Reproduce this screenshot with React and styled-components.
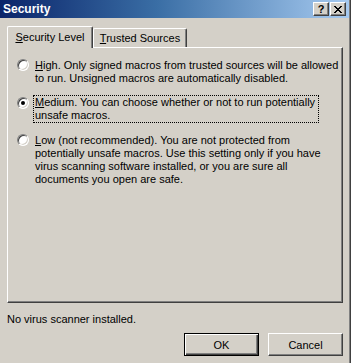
import React from "react";
import styled, { createGlobalStyle } from "styled-components";

const GlobalStyle = createGlobalStyle`
  html, body {
    margin: 0;
    padding: 0;
    background: #d4d0c8;
  }
  body {
    font-family: "Liberation Sans", Arial, sans-serif;
    font-size: 11px;
    color: #000;
  }
`;

const Window = styled.div`
  width: 351px;
  height: 363px;
  box-sizing: border-box;
  background: #d4d0c8;
  border-right: 1px solid #404040;
  box-shadow: inset -1px 0 #808080;
  display: flex;
  flex-direction: column;
  overflow: hidden;
`;

const TitleBar = styled.div`
  height: 18px;
  margin-right: 1px;
  display: flex;
  align-items: center;
  justify-content: space-between;
  padding: 0 3px 0 3px;
  background: linear-gradient(to right, #0a246a 0%, #3a6ea5 45%, #a6caf0 100%);
`;

const Title = styled.span`
  color: #fff;
  font-weight: bold;
  font-size: 12px;
  letter-spacing: 0;
`;

const CaptionButtons = styled.div`
  display: flex;
  gap: 1px;
`;

const CaptionButton = styled.div`
  width: 16px;
  height: 14px;
  box-sizing: border-box;
  background: #d4d0c8;
  border: 1px solid;
  border-color: #fff #404040 #404040 #fff;
  box-shadow: inset -1px -1px #808080;
  display: flex;
  align-items: center;
  justify-content: center;
  font-weight: bold;
  font-size: 11px;
  line-height: 1;
`;

const Body = styled.div`
  flex: 1;
  display: flex;
  flex-direction: column;
  padding: 8px 8px 0 7px;
`;

const TabRow = styled.div`
  display: flex;
  align-items: flex-end;
  height: 21px;
  position: relative;
  z-index: 1;
`;

const Tab = styled.div`
  box-sizing: border-box;
  width: ${(p) => p.$width}px;
  height: ${(p) => (p.$active ? 22 : 19)}px;
  margin-bottom: ${(p) => (p.$active ? -1 : 0)}px;
  margin-left: ${(p) => (p.$first ? 0 : 0)}px;
  background: #d4d0c8;
  border-top: 1px solid #fff;
  border-left: 1px solid #fff;
  border-right: 1px solid #404040;
  box-shadow: inset -1px 0 #808080;
  border-top-left-radius: 2px;
  border-top-right-radius: 2px;
  display: flex;
  align-items: ${(p) => (p.$active ? "flex-start" : "center")};
  padding-top: ${(p) => (p.$active ? 4 : 0)}px;
  justify-content: center;
  white-space: nowrap;
`;

const Panel = styled.div`
  box-sizing: border-box;
  width: 336px;
  height: 256px;
  border: 1px solid;
  border-color: #fff #404040 #404040 #fff;
  box-shadow: inset -1px -1px #808080;
  padding: 10px 10px 0 9px;
  display: flex;
  flex-direction: column;
`;

const Option = styled.div`
  display: flex;
  align-items: flex-start;
  gap: 4px;
  margin-top: ${(p) => p.$gap}px;
`;

const Radio = styled.span`
  flex: none;
  width: 12px;
  height: 12px;
  box-sizing: border-box;
  margin-top: ${(p) => p.$offset}px;
  border-radius: 50%;
  background: #fff;
  border: 1px solid;
  border-color: #808080 #fff #fff #808080;
  box-shadow: inset 1px 1px #404040, inset -1px -1px #d4d0c8;
  display: flex;
  align-items: center;
  justify-content: center;
  &::after {
    content: "";
    display: ${(p) => (p.$checked ? "block" : "none")};
    width: 4px;
    height: 4px;
    border-radius: 50%;
    background: #000;
  }
`;

const Label = styled.div`
  line-height: 13px;
  white-space: nowrap;
  padding: 0 1px;
  border: 1px dotted ${(p) => (p.$focused ? "#000" : "transparent")};
  width: ${(p) => (p.$focused ? "282px" : "auto")};
`;

const Key = styled.span`
  text-decoration: underline;
  text-underline-offset: 1px;
`;

const Status = styled.div`
  margin-top: 10px;
  line-height: 13px;
`;

const ButtonRow = styled.div`
  display: flex;
  justify-content: flex-end;
  gap: 9px;
  margin-top: 7px;
  width: 336px;
`;

const Button = styled.div`
  box-sizing: border-box;
  width: 75px;
  height: 23px;
  background: #d4d0c8;
  display: flex;
  align-items: center;
  justify-content: center;
  border: 1px solid;
  border-color: ${(p) => (p.$default ? "#000" : "#fff #404040 #404040 #fff")};
  box-shadow: ${(p) =>
    p.$default
      ? "inset 1px 1px #fff, inset -1px -1px #404040, inset -2px -2px #808080"
      : "inset -1px -1px #808080"};
`;

const CloseIcon = () => (
  <svg width="8" height="7" viewBox="0 0 8 7" shapeRendering="crispEdges">
    <path
      fill="#000"
      d="M0 0h2v1h1v1h2V1h1V0h2v1H7v1H6v1H5v1h1v1h1v1h1v1H6V6H5V5H3v1H2v1H0V6h1V5h1V4h1V3H2V2H1V1H0z"
    />
  </svg>
);

const options = [
  {
    key: "H",
    rest: "igh. Only signed macros from trusted sources will be allowed",
    lines: ["to run. Unsigned macros are automatically disabled."],
    gap: 0,
  },
  {
    key: "M",
    rest: "edium. You can choose whether or not to run potentially",
    lines: ["unsafe macros."],
    gap: 9,
    checked: true,
    focused: true,
  },
  {
    key: "L",
    rest: "ow (not recommended). You are not protected from",
    lines: [
      "potentially unsafe macros. Use this setting only if you have",
      "virus scanning software installed, or you are sure all",
      "documents you open are safe.",
    ],
    gap: 10,
  },
];

export default function App() {
  return (
    <>
      <GlobalStyle />
      <Window>
        <TitleBar>
          <Title>Security</Title>
          <CaptionButtons>
            <CaptionButton>?</CaptionButton>
            <CaptionButton>
              <CloseIcon />
            </CaptionButton>
          </CaptionButtons>
        </TitleBar>
        <Body>
          <TabRow>
            <Tab $active $width={86}>
              <span>
                <Key>S</Key>ecurity Level
              </span>
            </Tab>
            <Tab $width={94}>
              <span>
                <Key>T</Key>rusted Sources
              </span>
            </Tab>
          </TabRow>
          <Panel>
            {options.map((o) => (
              <Option key={o.key} $gap={o.gap}>
                <Radio $checked={o.checked} $offset={o.focused ? 2 : 1} />
                <Label $focused={o.focused}>
                  <Key>{o.key}</Key>
                  {o.rest}
                  {o.lines.map((l) => (
                    <div key={l}>{l}</div>
                  ))}
                </Label>
              </Option>
            ))}
          </Panel>
          <Status>No virus scanner installed.</Status>
          <ButtonRow>
            <Button $default>OK</Button>
            <Button>Cancel</Button>
          </ButtonRow>
        </Body>
      </Window>
    </>
  );
}
